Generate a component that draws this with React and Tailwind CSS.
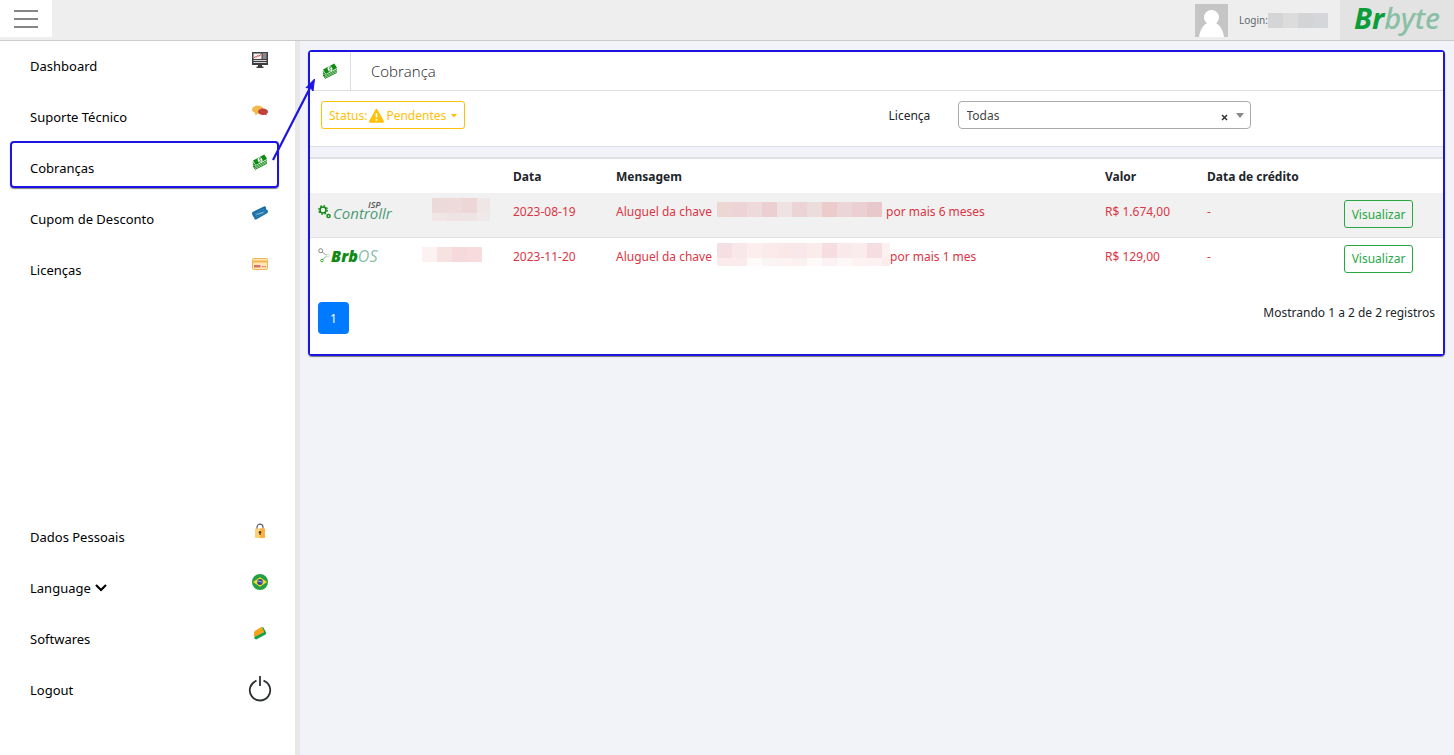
import React from "react";

const svgProps = { width: 16, height: 16, viewBox: "0 0 16 16", "aria-hidden": true };

const MonitorIcon = () => (
  <svg {...svgProps}>
    <rect x="0" y="0" width="16" height="13" rx="0.6" fill="#3f3c40" />
    <rect x="1.5" y="1.5" width="8" height="5.5" fill="#f4f4f4" />
    <path d="M10.5 2h4M10.5 4h4M10.5 6h4" stroke="#d5d5d5" strokeWidth="1" />
    <path d="M1.5 8.5h13M1.5 10.5h13" stroke="#d5d5d5" strokeWidth="1.1" />
    <path d="M2 5.8l1.4-1 1 .4 1.2-1.6 1.2.6L9.2 2.4" fill="none" stroke="#d8343a" strokeWidth="1" />
    <path d="M6 13h4v1.6h1.5V16h-7v-1.4H6z" fill="#3f3c40" />
  </svg>
);

const ChatIcon = () => (
  <svg {...svgProps}>
    <ellipse cx="5.800" cy="6.500" rx="5.800" ry="4" fill="#f3b94a" />
    <path d="M3 9.500l.4 3L6.500 10z" fill="#f3b94a" />
    <ellipse cx="11" cy="8.800" rx="5" ry="3.200" fill="#c1403a" />
    <path d="M12 11l2.500 1.600-.2-2.600z" fill="#c1403a" />
  </svg>
);

const MoneyIcon = () => (
  <svg {...svgProps}>
    <path d="M1 6.500L12.300.5l2.800 4.500L3.800 11z" fill="#118a15" />
    <ellipse cx="8" cy="5.800" rx="2.300" ry="2.600" fill="#f3fbf3" transform="rotate(-28 8 5.800)" />
    <path d="M8.900 4.500c-1.200-.5-2 .3-1.300 1.100.7.700 1.700.5 1 1.500-.4.400-.9.300-1.300.1" fill="none" stroke="#118a15" strokeWidth=".8" />
    <path d="M1 8.300l2.500 4L15 6.500M1 10l2.300 3.800L15 8M1.200 12l2 3.300L14.800 9.500" fill="none" stroke="#118a15" strokeWidth="1" />
  </svg>
);

const TicketIcon = () => (
  <svg {...svgProps}>
    <path d="M.3 7.200L11.800 1.400c.8-.3 1.600-.1 2 .5l.4 1.200c-.5.7-.2 1.400.6 1.600l1 .7c.3 1.400 0 2.400-.7 2.900L4.600 14.300c-1.200.4-2 .1-2.400-.6.300-1 .1-1.800-1-1.900L.300 9.500c-.4-1-.4-1.800 0-2.300z" fill="#1a70a8" />
    <path d="M2.700 8.900L11.500 4.200l1.900 3.100-8.700 4.700z" fill="none" stroke="#4c97c4" strokeWidth=".5" />
    <path d="M4.300 9.800l1.200-.9.700.7 1-1.400.8.700 1-1.400.8.600 1.800-1.100" fill="none" stroke="#c4e0f0" strokeWidth=".8" />
  </svg>
);

const CardIcon = () => (
  <svg {...svgProps}>
    <rect x=".5" y="2.500" width="15" height="11" rx="1" fill="#fbe6b9" stroke="#f3b64c" />
    <path d="M1 5.500h14" stroke="#f3b64c" strokeWidth="2" />
    <rect x="2" y="9" width="6.500" height="2.500" fill="#d9706e" />
    <path d="M10 10.700h1.600M12.500 10.700H14" stroke="#d9706e" strokeWidth="1.200" />
  </svg>
);

const LockIcon = () => (
  <svg {...svgProps}>
    <path d="M5 6V4.200a3 3 0 0 1 6 0V6" fill="none" stroke="#5b6168" strokeWidth="1.200" />
    <rect x="3" y="5.500" width="10" height="9.500" rx=".8" fill="#fdd077" />
    <path d="M8 5.500h4.200c.5 0 .8.300.8.800v7.900c0 .5-.3.800-.8.800H8z" fill="#fbb040" />
    <circle cx="8" cy="9.300" r="1.200" fill="#4a3a26" />
    <path d="M8 9.500V12" stroke="#4a3a26" strokeWidth="1.100" />
  </svg>
);

const BrazilIcon = () => (
  <svg {...svgProps}>
    <circle cx="8" cy="8" r="8" fill="#239f46" />
    <path d="M1 8l7-4.700L15 8l-7 4.700z" fill="#f8dd1c" />
    <circle cx="8" cy="8" r="2.900" fill="#2b49a3" />
    <path d="M5.300 7.300c2-.4 4 .2 5.300 1.700" fill="none" stroke="#e8eef8" strokeWidth=".7" />
  </svg>
);

const SoftwareIcon = () => (
  <svg {...svgProps}>
    <path d="M2 7.300L3.500 5.500 9 2.200h1.600l1.900 4.600-9 5.400L2 11.700z" fill="#f9a01b" />
    <path d="M10 2l1.400.4 2.400 4.700-1 1.300z" fill="#12a04a" />
    <path d="M2.300 12.200l.9-.4 9.900-5.300.9.900v1.900L4.200 14.600l-1.700-.8z" fill="#12a04a" />
  </svg>
);

const PowerIcon = () => (
  <svg width="24" height="26" viewBox="0 0 24 26" aria-hidden="true">
    <path d="M8.500 4.700a10.200 10.200 0 1 0 7 0M12 0v10" fill="none" stroke="#2d3033" strokeWidth="1.800" />
  </svg>
);

const GearsIcon = () => (
  <svg width="13" height="14" viewBox="0 0 13 14" aria-hidden="true">
    <circle cx="5" cy="5" r="3" fill="none" stroke="#118a15" strokeWidth="1.600" />
    <circle cx="5" cy="5" r="4.300" fill="none" stroke="#118a15" strokeWidth="1.300" strokeDasharray="1.690 1.690" />
    <circle cx="10.500" cy="11" r="1.600" fill="none" stroke="#118a15" strokeWidth="1.500" />
  </svg>
);

const NodesIcon = () => (
  <svg width="12" height="15" viewBox="0 0 12 15" aria-hidden="true">
    <path d="M4 4l5 3.500-4 4" fill="none" stroke="#888" strokeWidth=".8" />
    <circle cx="2.700" cy="2.700" r="2" fill="#fff" stroke="#777" strokeWidth=".9" />
    <circle cx="10" cy="7.500" r="1.500" fill="#fff" stroke="#bfe3c1" strokeWidth=".9" />
    <circle cx="4" cy="12.500" r="1.300" fill="#fff" stroke="#3aa540" />
  </svg>
);

const mainMenu = [
  { label: "Dashboard", Icon: MonitorIcon },
  { label: "Suporte Técnico", Icon: ChatIcon },
  { label: "Cobranças", Icon: MoneyIcon, marked: true },
  { label: "Cupom de Desconto", Icon: TicketIcon },
  { label: "Licenças", Icon: CardIcon },
];

const userMenu = [
  { label: "Dados Pessoais", Icon: LockIcon },
  { label: "Language", Icon: BrazilIcon, expandable: true },
  { label: "Softwares", Icon: SoftwareIcon },
  { label: "Logout", Icon: PowerIcon },
];

function MenuItem({ label, Icon, marked, expandable }) {
  return (
    <li className="relative">
      <a href="#" className="flex h-[51px] items-start justify-between pl-[30px] pr-[23px] text-black">
        <span className="flex items-center gap-1 pt-[15px]">
          {label}
          {expandable && (
            <svg width="12" height="8" viewBox="0 0 12 8" aria-hidden="true">
              <path d="M1 1l5 5 5-5" fill="none" stroke="#000" strokeWidth="2.200" />
            </svg>
          )}
        </span>
        <span className="flex w-6 justify-center pt-[11px]">
          <Icon />
        </span>
      </a>
      {marked && (
        <>
          <span className="pointer-events-none absolute -top-0.5 left-[10px] right-4 h-[47px] rounded border-2 border-[#1c14e0] shadow-[0_1px_1px_rgba(0,0,0,0.5)]" />
          <svg className="pointer-events-none absolute -top-[67px] left-[271px] z-10" width="48" height="86" viewBox="0 0 48 86" aria-hidden="true">
            <path d="M2 84L41 8" stroke="#1c14e0" strokeWidth="2.200" />
            <path d="M43.500 3l-1.500 12L39.500 11.500l-4.500.2z" fill="#1c14e0" stroke="#1c14e0" />
          </svg>
        </>
      )}
    </li>
  );
}

function Redacted({ rows, className = "" }) {
  return (
    <span className={"flex flex-col overflow-hidden " + className} aria-hidden="true">
      {rows.map((row, i) => (
        <span key={i} className={i === 0 ? "flex h-[15px]" : "flex h-2"}>
          {row.map((color, j) => (
            <span key={j} className="w-[15px] shrink-0" style={{ backgroundColor: color }} />
          ))}
        </span>
      ))}
    </span>
  );
}

const ControllrLogo = () => (
  <span className="flex h-6 items-start text-[#4f9a77]">
    <span className="pt-1">
      <GearsIcon />
    </span>
    <span className="relative pl-0.5 font-['Open_Sans',sans-serif] text-[15px] font-normal italic leading-6">
      Controllr
      <span className="absolute -top-1 left-[37px] text-[9px] font-semibold leading-4 text-[#555]">ISP</span>
    </span>
  </span>
);

const BrbOSLogo = () => (
  <span className="flex h-5 items-center text-[#8cbfa5]">
    <NodesIcon />
    <span className="pl-px font-['Open_Sans',sans-serif] text-base font-normal italic leading-5">
      <b className="font-extrabold text-[#118a15]">Brb</b>OS
    </span>
  </span>
);

const charges = [
  {
    Logo: ControllrLogo,
    userClass: "-mt-1 ml-[17px] w-[58px]",
    user: [
      ["#ecdada", "#eddbdb", "#ecd6d6", "#efe6e6"],
      ["#f0e6e6", "#eee3e3", "#efe4e4", "#efe9e9"],
    ],
    date: "2023-08-19",
    keyClass: "mr-1 w-[165px]",
    key: [["#edd7d5", "#eed3d6", "#eedadb", "#eccfd1", "#eee2e2", "#ecd3d6", "#eddcdc", "#ebcbcb", "#ecd5d7", "#ebcfd1", "#e9c8cc"]],
    period: "por mais 6 meses",
    value: "R$ 1.674,00",
    rowClass: "bg-[#f1f1f1]",
  },
  {
    Logo: BrbOSLogo,
    userClass: "ml-[7px] w-[60px]",
    user: [["#fdf2f2", "#f7e2e2", "#f6d9db", "#f8dbdd"]],
    date: "2023-11-20",
    keyClass: "-mt-1 w-[173px]",
    key: [
      ["#f6dfe2", "#f9e8ea", "#fceeee", "#faebea", "#fae8e9", "#f9e8ea", "#fbecec", "#f5dde1", "#fae9ec", "#faebed", "#f5dde1", "#fcf1ef"],
      ["#fbebed", "#fbebed", "#fffafa", "#fbf4f5", "#fdf3f2", "#fbf1f1", "#fffafa", "#fcf2f5", "#fdf8f8", "#fef3f2", "#fcf1f3", "#fbeeea"],
    ],
    period: "por mais 1 mes",
    value: "R$ 129,00",
    rowClass: "bg-white",
  },
];

export default function App() {
  return (
    <div className="flex min-h-screen flex-col bg-[#f2f3f8] font-['Noto_Sans',sans-serif] text-xs leading-5 text-[#212529]">
      <header className="flex h-[41px] items-stretch border-b border-[#cbcbcb] bg-[#eee]">
        <button type="button" aria-label="Menu" className="flex h-[37px] w-[52px] items-center justify-center bg-white">
          <span className="flex w-6 flex-col gap-1.5">
            <span className="h-0.5 bg-[#858585]" />
            <span className="h-0.5 bg-[#858585]" />
            <span className="h-0.5 bg-[#858585]" />
          </span>
        </button>
        <div className="ml-auto flex items-center pr-3">
          <svg width="33" height="33" viewBox="0 0 33 33" aria-hidden="true">
            <path d="M0 0h33v33H0z" fill="#c5c5c5" />
            <circle cx="16.500" cy="13.500" r="7.500" fill="#fff" />
            <path d="M4 33c1-8 5.500-13.500 9-14h7c3.500.5 8 6 9 14z" fill="#fff" />
          </svg>
          <span className="ml-[11px] w-[29px] text-[10px] text-[#5f6670]">Login:</span>
          <Redacted rows={[["#d4d5d7", "#dbdcdb", "#d3d4d6", "#d5d6d9"]]} />
        </div>
        <div className="flex w-[114px] justify-center bg-[#e3e3e3] text-[29px] font-medium italic leading-9 text-[#8abfa4]">
          <span>
            <b className="font-bold text-[#0c9d3b]">Br</b>byte
          </span>
        </div>
      </header>

      <div className="flex flex-1">
        <nav className="flex w-[300px] shrink-0 flex-col justify-between border-r-[5px] border-[#e8e8e8] bg-white pb-[39px] text-[13px] leading-5">
          <ul>
            {mainMenu.map((item) => (
              <MenuItem key={item.label} {...item} />
            ))}
          </ul>
          <ul>
            {userMenu.map((item) => (
              <MenuItem key={item.label} {...item} />
            ))}
          </ul>
        </nav>

        <main className="min-w-0 flex-1 pb-2 pl-2 pr-[9px] pt-[9px]">
          <div className="rounded border-2 border-[#1c14e0] shadow-[0_1px_1px_rgba(0,0,0,0.5)]">
            <section className="border-b border-[#dadde1] bg-white">
              <div className="flex h-[39px] items-stretch border-b border-[#dadde1]">
                <span className="flex w-[41px] items-center justify-center border-r border-[#dadde1]">
                  <MoneyIcon />
                </span>
                <h1 className="flex items-center pl-5 font-['Open_Sans',sans-serif] text-[15px] font-light">Cobrança</h1>
              </div>
              <div className="grid grid-cols-2 pb-[17px] pt-2.5">
                <div className="px-[11px]">
                  <button
                    type="button"
                    className="flex h-7 w-36 items-center justify-between whitespace-nowrap rounded-[3px] border border-[#ffc107] px-[7px] pt-px text-xs text-[#ffc107]"
                  >
                    <span className="flex items-center gap-0.5">
                      Status:
                      <svg width="15" height="14" viewBox="0 0 15 14" aria-hidden="true">
                        <path d="M6.500.600a1.200 1.200 0 0 1 2 0l6.200 11.200c.5.900-.1 1.900-1 1.900H1.300c-.9 0-1.500-1-1-1.900z" fill="#ffc107" />
                        <path d="M7.500 4.300v4.200M7.500 9.900v1.900" stroke="#fff" strokeWidth="1.700" />
                      </svg>
                      Pendentes
                    </span>
                    <svg width="6" height="4" viewBox="0 0 6 4" aria-hidden="true">
                      <path d="M0 0h6L3 3.500z" fill="#ffc107" />
                    </svg>
                  </button>
                </div>
                <div className="flex items-center px-3">
                  <label htmlFor="license" className="w-[69px] pt-px">
                    Licença
                  </label>
                  <div className="relative">
                    <select
                      id="license"
                      className="h-7 w-[293px] appearance-none rounded border border-[#aaa] bg-white pl-2 pr-12 pt-0.5 text-xs text-[#444]"
                    >
                      <option>Todas</option>
                    </select>
                    <button type="button" aria-label="Limpar" className="absolute right-5 top-1.5 h-5 w-3">
                      <svg className="m-auto" width="7" height="7" viewBox="0 0 7 7" aria-hidden="true">
                        <path d="M1 1l5 5M6 1L1 6" stroke="#333" strokeWidth="1.500" />
                      </svg>
                    </button>
                    <svg className="pointer-events-none absolute right-[7px] top-3" width="8" height="5" viewBox="0 0 8 5" aria-hidden="true">
                      <path d="M0 0h8L4 5z" fill="#888" />
                    </svg>
                  </div>
                </div>
              </div>
            </section>

            <section className="mt-2.5 bg-white pb-5">
              <table className="w-full table-fixed border-collapse border-t-2 border-[#dee2e6]">
                <colgroup>
                  <col className="w-[97px]" />
                  <col className="w-[98px]" />
                  <col className="w-[103px]" />
                  <col />
                  <col className="w-[102px]" />
                  <col className="w-[137px]" />
                  <col className="w-[107px]" />
                </colgroup>
                <thead>
                  <tr className="h-[35px] text-left">
                    <td />
                    <td />
                    <th className="px-2 pt-0.5 font-bold">Data</th>
                    <th className="px-2 pt-0.5 font-bold">Mensagem</th>
                    <th className="px-2 pt-0.5 font-bold">Valor</th>
                    <th className="whitespace-nowrap px-2 pt-0.5 font-bold">Data de crédito</th>
                    <td />
                  </tr>
                </thead>
                <tbody className="text-[#dc3545]">
                  {charges.map(({ Logo, user, userClass, date, key, keyClass, period, value, rowClass }) => (
                    <tr key={date} className={"h-11 border-b border-[#dee2e6] align-top last:border-0 " + rowClass}>
                      <td className="pl-2 pt-2">
                        <Logo />
                      </td>
                      <td className="pl-2 pt-[9px]">
                        <Redacted rows={user} className={userClass} />
                      </td>
                      <td className="px-2 pt-[9px]">{date}</td>
                      <td className="px-2 pt-[9px]">
                        <span className="flex h-5 items-start whitespace-nowrap">
                          <span className="w-[101px]">Aluguel da chave</span>
                          <Redacted rows={key} className={keyClass} />
                          {period}
                        </span>
                      </td>
                      <td className="px-2 pt-[9px]">{value}</td>
                      <td className="px-2 pt-[9px]">-</td>
                      <td className="px-2 pt-[7px]">
                        <button type="button" className="block h-7 w-[69px] rounded-[3px] border border-[#28a745] pt-px text-center text-[#28a745]">
                          Visualizar
                        </button>
                      </td>
                    </tr>
                  ))}
                </tbody>
              </table>
              <div className="flex items-start justify-between px-2 pt-[21px]">
                <button type="button" className="h-8 w-[31px] rounded bg-[#007bff] pt-px text-white">
                  1
                </button>
                <p className="pt-px">Mostrando 1 a 2 de 2 registros</p>
              </div>
            </section>
          </div>
        </main>
      </div>
    </div>
  );
}
